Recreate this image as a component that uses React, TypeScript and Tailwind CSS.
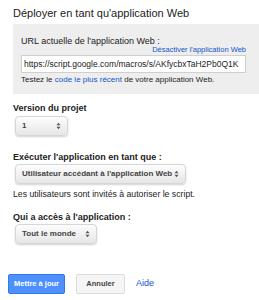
import React from 'react'

function Arrows() {
  return (
    <svg width="5" height="8" viewBox="0 0 5 8" className="shrink-0">
      <path d="M0.5 3.2 L2.5 0.8 L4.5 3.2 Z" fill="#555" />
      <path d="M0.5 4.8 L2.5 7.2 L4.5 4.8 Z" fill="#555" />
    </svg>
  )
}

function Select({ label, width }: { label: string; width: string }) {
  return (
    <div
      className={`${width} ml-[2px] h-[20px] flex items-center justify-between pl-[6px] pr-[6px] rounded-[4px] border border-[#d6d6d6] bg-gradient-to-b from-[#fdfdfd] to-[#e6e6e6] shadow-[0_1px_2px_rgba(0,0,0,0.18)]`}
    >
      <span className="text-[8px] font-bold text-[#444] leading-[10px] whitespace-nowrap">{label}</span>
      <Arrows />
    </div>
  )
}

export default function App() {
  return (
    <div className="w-[259px] h-[300px] bg-white overflow-hidden text-[#222]" style={{ fontFamily: '"Liberation Sans", Arial, sans-serif' }}>
      <div className="pt-[6px] pl-[13px]">
        <h1 className="text-[11px] leading-[14px] font-normal text-[#222]">Déployer en tant qu'application Web</h1>

        <div className="mt-[4px] bg-[#eeeeee] pl-[8px] pr-[13px] pt-[12px] pb-[9px]">
          <p className="text-[9px] leading-[11px]">URL actuelle de l'application Web :</p>
          <div className="-mt-[2px] flex justify-end">
            <a className="text-[7.5px] leading-[9px] text-[#15c]">Désactiver l'application Web</a>
          </div>
          <div className="mt-[1px] h-[18px] bg-white border border-[#cfcfcf] flex items-center pl-[2px] overflow-hidden">
            <span className="text-[8.5px] leading-[11px] whitespace-nowrap text-[#222]">
              https://script.google.com/macros/s/AKfycbxTaH2Pb0Q1K
            </span>
          </div>
          <p className="mt-[2px] text-[8px] leading-[10px]">
            Testez le <span className="text-[#15c]">code le plus récent</span> de votre application Web.
          </p>
        </div>

        <p className="mt-[9px] text-[9px] leading-[11px] font-bold">Version du projet</p>
        <div className="mt-[2px]">
          <Select label="1" width="w-[53px]" />
        </div>

        <p className="mt-[16px] text-[9px] leading-[11px] font-bold">Exécuter l'application en tant que :</p>
        <div className="mt-[1px]">
          <Select label="Utilisateur accédant à l'application Web" width="w-[171px]" />
        </div>
        <p className="mt-[5px] text-[8.7px] leading-[11px]">Les utilisateurs sont invités à autoriser le script.</p>

        <p className="mt-[12px] text-[9px] leading-[11px] font-bold">Qui a accès à l'application :</p>
        <div className="mt-[1px]">
          <Select label="Tout le monde" width="w-[82px]" />
        </div>
      </div>

      <div className="mt-[30px] pl-[8px] flex items-center">
        <button className="w-[57px] h-[20px] rounded-[2px] bg-[#4d90fe] border border-[#3079ed] text-white text-[7.5px] font-bold">
          Mettre à jour
        </button>
        <button className="ml-[11px] w-[49px] h-[20px] rounded-[2px] bg-[#f5f5f5] border border-[#dcdcdc] text-[#444] text-[7.5px] font-bold">
          Annuler
        </button>
        <a className="ml-[11px] text-[9px] text-[#15c]">Aide</a>
      </div>
    </div>
  )
}
